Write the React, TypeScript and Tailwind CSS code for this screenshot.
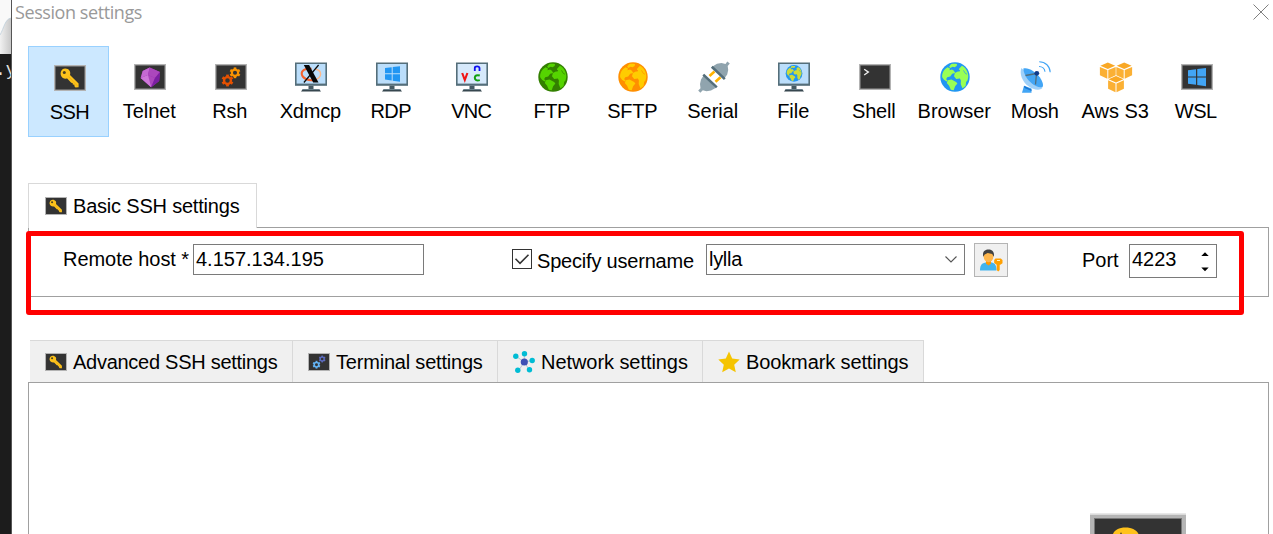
import type { ReactNode } from "react";

function DarkScreen() {
  return (
    <>
      <rect x="0" y="3" width="32" height="26" fill="#b3b3b3" />
      <rect x="1" y="4" width="30" height="24" fill="#8a8a8a" />
      <rect x="1.6" y="4.6" width="28.8" height="22.8" fill="#333333" />
    </>
  );
}

function KeyShape() {
  return (
    <>
      <path
        d="M8.2 7.6C10.4 5.9 14.1 6.4 15.7 9c.7 1.3 .7 2.6 .3 3.9l8.6 8.7v3.6l-3.1.2-1.1-1.2v-1.5l-1.6-.2-.2-1.6-1.4-.1-4-4.2C10.200 17.200 7.400 16 6.800 13.100c-.5-2 .1-4.200 1.400-5.500Z"
        fill="#fcc21b"
      />
      <path d="M14.500 14.600l9 9.300" stroke="#eda912" strokeWidth=".8" />
      <circle cx="10.300" cy="10.500" r="1.500" fill="#4a4020" />
    </>
  );
}

function Key() {
  return (
    <>
      <DarkScreen />
      <KeyShape />
    </>
  );
}

function SmallKey() {
  return (
    <svg viewBox="0 2.5 32 27" className="block h-[18px] w-[22px] shrink-0" preserveAspectRatio="none">
      <rect x="0" y="2.5" width="32" height="27" fill="#b3b3b3" />
      <rect x="1.5" y="4" width="29" height="24" fill="#333333" />
      <KeyShape />
    </svg>
  );
}

const gearTeeth = [0, 60, 120, 180, 240, 300];

function Gear({ x, y, r, color }: { x: number; y: number; r: number; color: string }) {
  return (
    <g transform={`translate(${x} ${y}) scale(${r / 6})`}>
      <circle r="3.500" fill="none" stroke={color} strokeWidth="2.400" />
      {gearTeeth.map((a) => (
        <rect key={a} x="-1.400" y="-6" width="2.800" height="2.300" fill={color} transform={`rotate(${a})`} />
      ))}
    </g>
  );
}

function Monitor({ screen = "#bbdefb" }: { screen?: string }) {
  return (
    <>
      <rect x="0" y="1.5" width="32" height="23.300" fill="#546e7a" />
      <rect x="1.6" y="3" width="28.800" height="19.600" fill={screen} />
      <rect x="13.500" y="24.800" width="5" height="3.200" fill="#455a64" />
      <path d="M8 28h16l2 2.400H6Z" fill="#37474f" />
      <path d="M7.300 28h17.400v.8H7.300Z" fill="#78909c" />
    </>
  );
}

function Windows({ color }: { color: string }) {
  return (
    <path
      d="M0 1.900 6.700 1v6.100H0ZM7.700.9 15 0v7.100H7.700ZM0 8h6.700v6.300L0 13.400ZM7.700 8H15v7.500l-7.300-1Z"
      fill={color}
    />
  );
}

function Globe({ sea, land }: { sea: string; land: string }) {
  return (
    <>
      <circle cx="16" cy="16" r="14.700" fill={sea} />
      <path d="M12 3.200c2.200-.5 4.300-.5 6.100 0l-.5 1.900-2 1.200-2-.5-2.300 1.100-1.200-1.200Z" fill={land} />
      <path
        d="M8.600 6.200l2.400 1.200-.6 1.800 2.600-.8 1.900 1.400 1.300 2.300-3 .6-2 2.800-3 .7-1.100 2 1.400 1.100-.9 1.100-2.600-1.600-1.800-2.600c-.4-3.600 1.300-7.500 5.400-10Z"
        fill={land}
      />
      <path d="M8.700 19.200l3.800-.7 4.600 2.400 1.300 1.600-2.300 2.800-1.400 4-2.900-.6-1.700-4-2.300-2.600Z" fill={land} />
      <path
        d="M20.100 7.800l2.800-3c3.900 2 6.500 6.100 6.400 11l-.7 3.500-1.500 1.700-.4 3.800c-1 1.100-2 1.800-3.300 2.500l-1.700-4.300.2-3.500-1-1.900-3.700.3-2.200-2.600.9-3.200 2.900-1.700 1.700.1.700-1.200-1.100-.4Z"
        fill={land}
      />
      <path d="M24.500 9.400l1.900 3.100 1.600.7" fill="none" stroke={sea} strokeWidth=".7" />
    </>
  );
}

function Cube({ x, y }: { x: number; y: number }) {
  return (
    <g transform={`translate(${x} ${y})`}>
      <path d="M0-8.600 7.400-5.400 0-2.200-7.400-5.400Z" fill="#f9a825" />
      <path d="M-7.900-4.300-.5-1.100v8.700l-7.400-3.500Z" fill="#fbb034" />
      <path d="M7.900-4.300.5-1.100v8.700l7.400-3.500Z" fill="#fbb034" />
    </g>
  );
}

function Terminal() {
  return (
    <>
      <DarkScreen />
      <path d="m5.200 8.200 4.200 2.900-4.200 2.900" fill="none" stroke="#eeeeee" strokeWidth="1.300" />
    </>
  );
}

function Plug() {
  return (
    <>
      <path d="m16.500 10.500-5 4.500M22.500 16.200l-5 4.500" stroke="#ffb300" strokeWidth="2.600" />
      <g fill="#90a4ae">
        <path d="M14.500 5.500 19 2.800 23.500 2l4 1 1.800-2.500L31.800 2.500 29.700 5l.5 4-1 4.500-2.700 3.800Z" />
        <path d="M17.500 27 13 29.500l-4.500.7-3.700-1-2.500 2.500L.2 29.500l2.300-2.300L2 23l1-4.500 2.800-4.200Z" />
      </g>
      <path d="m13.800 5.800 13 12.300M5.300 13.600l13.500 12.800" stroke="#546e7a" strokeWidth="2.600" />
    </>
  );
}

function Dish() {
  return (
    <>
      <path d="M4 24.800 2 31.800h9.500v-4.300Z" fill="#42a5f5" />
      <path d="m4 24.800 7.500 3.800v1.500L4.500 27Z" fill="#1976d2" />
      <path d="M1.400 7C-1.500 14 4.500 27.500 17.800 28.800c1.800.1 3.400-.6 4.600-1.700Z" fill="#9fd0f9" />
      <path d="M3.300 7.500C7.500 5.800 15.800 10.500 20 16.500c2.300 3.800 4 7.500 2.400 9.800C14.500 27 4 17.500 3.300 7.500Z" fill="#42a5f5" />
      <path d="M5.500 14.500 16.500 12.500M15.500 23.500 16.500 12.500" stroke="#546e7a" strokeWidth="1.300" fill="none" />
      <circle cx="16.800" cy="12.300" r="2.400" fill="#0d3a8c" />
      <path d="M19 5.500c3.200 0 5.700 2.200 6 5.200M19.200.7c6.200 0 10.800 4.600 11 10.600" fill="none" stroke="#42a5f5" strokeWidth="1.100" />
    </>
  );
}

function XLogo() {
  return (
    <>
      <Monitor />
      <path d="M16.500 7.800C10 7 6 9.800 6.800 13.500S13 20 19 19" fill="none" stroke="#f4622e" strokeWidth="2" />
      <path d="M20.500 8.300c6.500 1 7.500 8.500-1.500 10.700" fill="none" stroke="#ffb98a" strokeWidth="1.500" />
      <path d="M8.800 4h5.300L23.500 21.500h-5.300Z" fill="#080808" />
      <path d="M23.600 4 8.900 21.500" stroke="#080808" strokeWidth="1.200" />
    </>
  );
}

const toolbar: { label: string; text: string; icon: ReactNode }[] = [
  { label: "SSH", text: "tracking-[-0.5px]", icon: <Key /> },
  {
    label: "Telnet",
    text: "tracking-[-0.1px]",
    icon: (
      <>
        <DarkScreen />
        <path d="M15.700 6.500 26 11l-.8 9-8 6.300L6.700 17l2-7Z" fill="#9c27b0" />
        <path d="M15.700 6.500 14 14l-7.300 3 2-7Z" fill="#c56ad3" />
        <path d="M15.700 6.500 26 11l-5 6-7-3Z" fill="#ab47bc" />
        <path d="M14 14l7 3-3.800 9.300L6.700 17Z" fill="#ab47bc" />
        <path d="m26 11-.8 9-8 6.300L21 17Z" fill="#7b1fa2" />
        <path d="m6.700 17 7.300-3 3.200 12.300Z" fill="#ce78da" />
      </>
    ),
  },
  {
    label: "Rsh",
    text: "tracking-[-0.2px]",
    icon: (
      <>
        <DarkScreen />
        <Gear x={20} y={11.800} r={5.400} color="#fb9400" />
        <Gear x={12.500} y={19.500} r={5.900} color="#e65100" />
      </>
    ),
  },
  { label: "Xdmcp", text: "tracking-[-0.2px]", icon: <XLogo /> },
  {
    label: "RDP",
    text: "tracking-[-0.6px]",
    icon: (
      <>
        <Monitor />
        <g transform="translate(9 5.2)">
          <Windows color="#2196f3" />
        </g>
      </>
    ),
  },
  {
    label: "VNC",
    text: "tracking-[-0.8px]",
    icon: (
      <>
        <Monitor screen="#d6e9fb" />
        <path d="m6.200 12 2.600 7 2.600-7" fill="none" stroke="#f01414" strokeWidth="2.100" />
        <path d="M18.800 10V7q0-1.700 2.300-1.700T23.500 7v3" fill="none" stroke="#1010f0" strokeWidth="1.800" />
        <path d="M23.800 14.500c-3-.9-5 .1-5 2.300s2 3.200 5 2.300" fill="none" stroke="#10a010" strokeWidth="2" />
      </>
    ),
  },
  { label: "FTP", text: "tracking-[-0.4px]", icon: <Globe sea="#338000" land="#55d400" /> },
  { label: "SFTP", text: "tracking-[-0.3px]", icon: <Globe sea="#ff8f00" land="#ffcc00" /> },
  { label: "Serial", text: "", icon: <Plug /> },
  {
    label: "File",
    text: "",
    icon: (
      <>
        <Monitor />
        <g transform="translate(6.9 3.3) scale(.57)">
          <Globe sea="#2196f3" land="#cddc39" />
        </g>
      </>
    ),
  },
  { label: "Shell", text: "tracking-[-0.2px]", icon: <Terminal /> },
  { label: "Browser", text: "", icon: <Globe sea="#2196f3" land="#99ff55" /> },
  { label: "Mosh", text: "tracking-[-0.2px]", icon: <Dish /> },
  {
    label: "Aws S3",
    text: "",
    icon: (
      <>
        <Cube x={7.8} y={10.2} />
        <Cube x={24.2} y={10.2} />
        <Cube x={16} y={23.6} />
      </>
    ),
  },
  {
    label: "WSL",
    text: "tracking-[-0.5px]",
    icon: (
      <>
        <DarkScreen />
        <g transform="translate(7 7) scale(1.2 1.18)">
          <Windows color="#42a5f5" />
        </g>
      </>
    ),
  },
];

function Toolbar() {
  return (
    <div className="ml-[17px] mt-[18px] flex h-[91px] w-[1207px] shrink-0">
      {toolbar.map((t, i) => (
        <button
          key={t.label}
          className={
            i === 0
              ? "-ml-px flex w-[81px] shrink-0 flex-col items-center border border-[#99d1ff] bg-[#cce8ff] pl-0.5 pt-[15px]"
              : "flex min-w-0 flex-1 flex-col items-center pt-[15px]"
          }
        >
          <svg
            viewBox="0 0 32 32"
            className={i === 0 ? "ml-px block h-8 w-8 shrink-0 overflow-visible" : "ml-[1.5px] block h-8 w-8 shrink-0 overflow-visible"}
          >
            {t.icon}
          </svg>
          <span className={`mt-1.5 whitespace-nowrap leading-6 ${t.text}`}>{t.label}</span>
        </button>
      ))}
    </div>
  );
}

function NetworkIcon() {
  return (
    <svg viewBox="0 0 22 22" className="block h-[22px] w-[22px] shrink-0">
      <path d="M11.300 11 3 5.300M11.300 11V3M11.300 11l8-1.500M11.300 11l5 8M11.300 11l-6 9" stroke="#b8c4d0" strokeWidth="1" />
      <circle cx="11.300" cy="11" r="3.600" fill="#3f51b5" />
      <g fill="#00bcd4">
        <circle cx="2.800" cy="5.200" r="2.700" />
        <circle cx="11.500" cy="2.800" r="2.700" />
        <circle cx="19.200" cy="9.500" r="2.700" />
        <circle cx="16.500" cy="18.700" r="2.700" />
        <circle cx="4.800" cy="19.300" r="2.700" />
      </g>
    </svg>
  );
}

function UserKey() {
  return (
    <svg viewBox="0 0 24 24" className="block h-6 w-6">
      <path d="M1 22.500c0-6 2-7.500 7.500-8.200h3c4 .7 6 2.200 6 8.200Z" fill="#42b4ee" />
      <path d="M7 12.500h5v3.300L9.500 17.500 7 15.800Z" fill="#ff9800" />
      <ellipse cx="9.500" cy="8.300" rx="4.900" ry="5.900" fill="#ffb74d" />
      <path d="M4.300 8.800C3 3.500 6 1.500 9.500 1.500S16 4 14.700 8.800l-1.500-2.800-4.500-1-3 1.500Z" fill="#424242" />
      <path d="M16.500 10.500h5.300L23.500 12v3.300l-2.200 1.500h-.6V22l-1.500 1.400-1.500-1.400v-5.200l-2.500-1.700V12Z" fill="#ffa000" />
      <path d="M18 12.500h3" stroke="#fff3c0" strokeWidth="1" />
    </svg>
  );
}

function Tab({ icon, label, className }: { icon: ReactNode; label: string; className: string }) {
  return (
    <div className={`flex h-[42px] shrink-0 items-center gap-1.5 border-r border-t border-[#d9d9d9] bg-[#f0f0f0] pl-[15px] pt-px ${className}`}>
      {icon}
      <span className="whitespace-nowrap">{label}</span>
    </div>
  );
}

function Backdrop() {
  return (
    <div className="flex h-full w-3 shrink-0 flex-col overflow-hidden border-r border-[#555] bg-[#1c1c1c]">
      <svg viewBox="0 0 12 54" className="block h-[54px] w-3 shrink-0">
        <defs>
          <linearGradient id="tab" x1="0" y1="0" x2="1" y2="0">
            <stop offset="0" stopColor="#f1f1f1" />
            <stop offset="1" stopColor="#c4c4c4" />
          </linearGradient>
        </defs>
        <path d="M0 0h12v54H0Z" fill="url(#tab)" />
        <path d="M0 0h11v18C5 19 4 28 0 35Z" fill="#f9f9f9" />
        <path d="M0 35C4 28 5 19 11 18" fill="none" stroke="#b9cbd8" strokeWidth=".7" />
      </svg>
      <span className="-ml-[5px] mt-1 whitespace-pre font-['Liberation_Mono'] text-lg leading-6 text-[#e0e0e0]">.y</span>
    </div>
  );
}

export default function App() {
  return (
    <div className="relative flex h-[534px] w-[1273px] overflow-hidden bg-white font-['Liberation_Sans',sans-serif] text-[20px] text-black">
      <Backdrop />
      <main className="flex min-w-0 flex-1 flex-col">
        <header className="flex h-7 shrink-0 justify-between pl-[3px] pr-1">
          <h1 className="whitespace-nowrap font-['Open_Sans',sans-serif] text-[18px] leading-[25px] tracking-[-0.42px] text-[#999]">
            Session settings
          </h1>
          <svg viewBox="0 0 16 16" className="mt-1 block h-4 w-4">
            <path d="m.5.5 15 15m0-15-15 15" stroke="#808080" strokeWidth="1" />
          </svg>
        </header>
        <Toolbar />

        <section className="ml-4 mt-[46px] flex w-[1241px] shrink-0 flex-col">
          <div className="z-10 flex h-[45px] w-[229px] items-center border border-b-0 border-[#d9d9d9] bg-white pl-4">
            <SmallKey />
            <span className="ml-1.5 whitespace-nowrap tracking-[-0.2px]">Basic SSH settings</span>
          </div>
          <div className="-mt-px flex h-[70px] items-start border border-[#a0a0a0] pl-[34px] pt-4">
            <label className="mt-px w-[130px] whitespace-nowrap leading-7 tracking-[-0.05px]">Remote host *</label>
            <div className="flex h-[31px] w-[231px] items-center border border-[#7a7a7a] bg-white pb-px pl-0.5">4.157.134.195</div>
            <span className="ml-[88px] mt-[5px] flex h-5 w-5 shrink-0 items-center justify-center border border-[#333] bg-white">
              <svg viewBox="0 0 18 18" className="h-[18px] w-[18px]">
                <path d="m2.500 8.800 4.500 4.500 8.500-8.500" fill="none" stroke="#333" strokeWidth="1.600" />
              </svg>
            </span>
            <label className="ml-[5px] mt-[3px] w-[169px] whitespace-nowrap leading-7 tracking-[-0.2px]">Specify username</label>
            <div className="flex h-[31px] w-[259px] items-center justify-between border border-[#7a7a7a] bg-white pb-px pl-0.5 pr-1.5">
              <span className="tracking-[-0.3px]">lylla</span>
              <svg viewBox="0 0 14 14" className="h-3.5 w-3.5">
                <path d="m1.500 4.500 5.500 5.500 5.500-5.500" fill="none" stroke="#555" strokeWidth="1.100" />
              </svg>
            </div>
            <button className="-mt-px ml-[9px] flex h-[34px] w-[34px] items-center justify-center border border-[#b4b4b4] bg-[#f0f0f0]">
              <UserKey />
            </button>
            <label className="ml-[74px] mt-0.5 w-[47px] whitespace-nowrap leading-7">Port</label>
            <div className="flex h-[34px] w-[88px] justify-between border border-[#7a7a7a] bg-white pl-0.5 pr-1.5">
              <span className="leading-7">4223</span>
              <svg viewBox="0 0 10 32" className="h-8 w-2.5">
                <path d="M1.300 11 5 7.300 8.700 11ZM1.300 22.500 5 26.200 8.700 22.500Z" fill="#000" />
              </svg>
            </div>
          </div>
        </section>

        <section className="ml-4 mt-[43px] flex min-h-0 w-[1241px] flex-1 flex-col">
          <div className="ml-0.5 flex">
            <Tab className="w-[263px] tracking-[-0.27px]" icon={<SmallKey />} label="Advanced SSH settings" />
            <Tab
              className="w-[205px] tracking-[-0.2px]"
              icon={
                <svg viewBox="0 0 22 18" className="block h-[18px] w-[22px] shrink-0">
                  <rect width="22" height="18" fill="#b3b3b3" />
                  <rect x="1" y="1" width="20" height="16" fill="#333" />
                  <Gear x={14.2} y={6} r={3.4} color="#5c6bc0" />
                  <Gear x={8.5} y={11.7} r={3.9} color="#64b5f6" />
                </svg>
              }
              label="Terminal settings"
            />
            <Tab className="w-[205px] tracking-[-0.06px]" icon={<NetworkIcon />} label="Network settings" />
            <Tab
              className="w-[221px] tracking-[-0.12px]"
              icon={
                <svg viewBox="0 0 22 22" className="block h-[22px] w-[22px] shrink-0">
                  <path d="m11 .5 3.200 7 7.500.9-5.500 5.300 1.600 7.600-6.800-3.700-6.800 3.700 1.600-7.600L.3 8.400l7.500-.9Z" fill="#f5c400" />
                </svg>
              }
              label="Bookmark settings"
            />
          </div>
          <div className="flex min-h-0 flex-1 items-end justify-end border border-b-0 border-[#a0a0a0] pr-[82px]">
            <svg viewBox="0 0 96 21" className="block h-[21px] w-24">
              <path d="M0 0h96v21H0Z" fill="#e8e8e8" />
              <path d="M0 1.700h96V21H0Z" fill="#b5b5b5" />
              <path d="M4 5h88v16H4Z" fill="#777" />
              <path d="M5 6h86v15H5Z" fill="#333" />
              <path d="M23 21c1.500-4 6-6.500 12.500-6.500S46.500 17 48.500 21Z" fill="#ffc21c" />
              <circle cx="31" cy="20.500" r="1" fill="#7c6220" />
            </svg>
          </div>
        </section>
      </main>
      <div className="pointer-events-none absolute left-[26px] top-[231px] z-20 h-[84px] w-[1218px] rounded-[3px] border-[5px] border-[#ff0000]" />
    </div>
  );
}
